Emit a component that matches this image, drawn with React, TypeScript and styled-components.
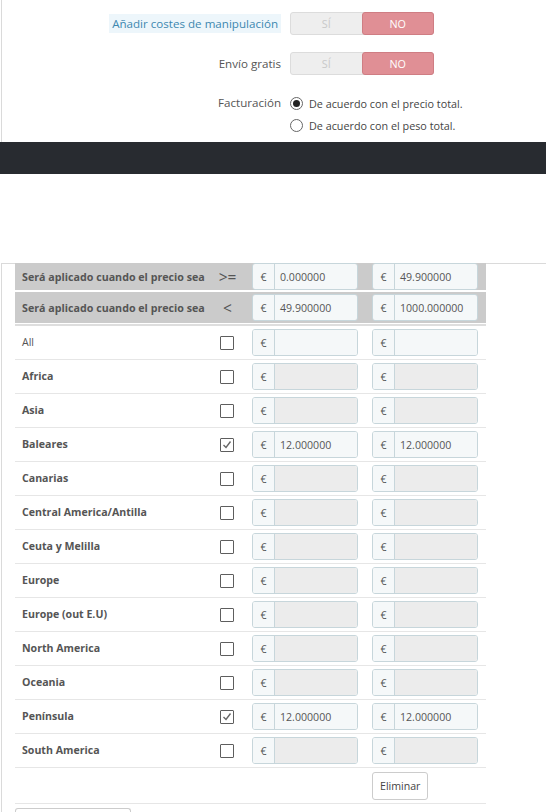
import styled, { createGlobalStyle } from "styled-components";

const GlobalStyle = createGlobalStyle`
    * {
        margin: 0;
        padding: 0;
        box-sizing: border-box;
    }
    body {
        background-color: #fff;
        font-family: "Open Sans", "DejaVu Sans", sans-serif;
        color: #555;
        font-size: 11px;
    }
`

interface IRowProps {
    bold?: boolean;
}
interface IInputProps {
    disabled?: boolean;
}
interface IHeadProps {
    first?: boolean;
}

const TopPanel = styled.div`
    height: 142px;
    margin-left: 1px;
    border-left: 1px solid #dadada;
    padding-top: 12px;
`
const FormRow = styled.div`
    display: grid;
    grid-template-columns: 279px 1fr;
    column-gap: 9px;
    align-items: center;
    margin-bottom: 17px;
`
const Label = styled.div`
    text-align: right;
    font-size: 11.6px;
    color: #555;
`
const TipLabel = styled.span`
    display: inline-block;
    background-color: #edf6fb;
    color: #3d88b0;
    padding: 2px 3px;
`
const Switch = styled.div`
    display: flex;
    width: 144px;
    height: 23px;
    border-radius: 3px;
    background-color: #eee;
    border: 1px solid #dcdcdc;
`
const SwitchHalf = styled.div<{ active?: boolean }>`
    flex: 1;
    display: flex;
    align-items: center;
    justify-content: center;
    font-size: 10.8px;
    color: ${p => p.active ? '#fff' : '#c9c9c9'};
    background-color: ${p => p.active ? '#e08f95' : 'transparent'};
    border: ${p => p.active ? '1px solid #cf7d83' : 'none'};
    border-radius: 3px;
    margin: ${p => p.active ? '-1px -1px -1px 0' : '0'};
`
const RadioList = styled.div`
    display: flex;
    flex-direction: column;
    gap: 8px;
    padding-top: 4px;
`
const RadioItem = styled.div`
    display: flex;
    align-items: center;
    gap: 6px;
    font-size: 10.8px;
    color: #444;
    height: 14px;
`
const RadioDot = styled.span<{ checked?: boolean }>`
    width: 13px;
    height: 13px;
    border-radius: 50%;
    border: 1px solid #666;
    display: flex;
    align-items: center;
    justify-content: center;
    &::after {
        content: "";
        width: 7px;
        height: 7px;
        border-radius: 50%;
        background-color: ${p => p.checked ? '#222' : 'transparent'};
    }
`
const DarkBar = styled.div`
    height: 32px;
    background-color: #282b30;
`
const Spacer = styled.div`
    height: 89px;
`
const TablePanel = styled.div`
    margin-left: 1px;
    border-left: 1px solid #dadada;
    border-top: 1px solid #dadada;
    padding-left: 13px;
`
const Table = styled.div`
    width: 471px;
`
const HeadRow = styled.div<IHeadProps>`
    display: grid;
    grid-template-columns: 197px 33px 120px 121px;
    align-items: center;
    background-color: #cbcbcb;
    height: ${p => p.first ? '27px' : '31px'};
    margin-bottom: ${p => p.first ? '2px' : '0'};
    margin-top: ${p => p.first ? '-1px' : '0'};
    & > * {
        align-self: ${p => p.first ? 'start' : 'center'};
    }
`
const HeadLabel = styled.div`
    padding-left: 7px;
    font-weight: 700;
    font-size: 10.7px;
    color: #555;
    white-space: nowrap;
    align-self: center !important;
`
const Operator = styled.div`
    font-size: 15.5px;
    color: #555;
    text-align: center;
    align-self: center !important;
    padding-right: 2px;
`
const HeadEnd = styled.div`
    height: 3px;
    border-top: 1px solid #fff;
    border-bottom: 2px solid #dedede;
`
const Row = styled.div`
    display: grid;
    grid-template-columns: 197px 33px 120px 121px;
    align-items: center;
    height: 34px;
    border-bottom: 1px solid #e6e6e6;
`
const ZoneName = styled.div<IRowProps>`
    padding-left: 7px;
    padding-bottom: 2px;
    font-weight: ${p => p.bold ? 700 : 400};
    font-size: 10.6px;
    color: #555;
`
const Check = styled.span`
    width: 14px;
    height: 14px;
    border: 1.5px solid #5e5e5e;
    border-radius: 1px;
    display: flex;
    align-items: center;
    justify-content: center;
    justify-self: center;
    margin-right: 3px;
    background-color: #fff;
`
const Cell = styled.div<{ last?: boolean }>`
    padding-left: 7px;
    padding-right: ${p => p.last ? '8px' : '7px'};
`
const InputGroup = styled.div`
    display: flex;
    height: 27px;
    border: 1px solid #c7d6db;
    border-radius: 3px;
    overflow: hidden;
`
const Addon = styled.span`
    width: 22px;
    display: flex;
    align-items: center;
    justify-content: center;
    background-color: #f5f8f9;
    border-right: 1px solid #c7d6db;
    font-size: 10.5px;
    color: #555;
`
const Input = styled.span<IInputProps>`
    flex: 1;
    display: flex;
    align-items: center;
    padding-left: 5px;
    font-size: 10.6px;
    color: #555;
    background-color: ${p => p.disabled ? '#ececec' : '#f5f8f9'};
`
const Button = styled.button`
    font-family: "Open Sans", "DejaVu Sans", sans-serif;
    font-size: 10.6px;
    color: #444;
    background-color: #fff;
    border: 1px solid #ccc;
    border-radius: 3px;
    padding: 0 7px;
    height: 28px;
`
const ButtonRow = styled.div`
    display: grid;
    grid-template-columns: 350px 121px;
    align-items: center;
    height: 36px;
    border-bottom: 1px solid #e6e6e6;
    & > button {
        justify-self: start;
        margin-left: 7px;
    }
`
const BottomButton = styled.div`
    margin-top: 4px;
    width: 116px;
    height: 20px;
    border: 1px solid #ccc;
    border-bottom: none;
    border-radius: 3px 3px 0 0;
`

const zones = [
    { name: "All", bold: false },
    { name: "Africa", bold: true },
    { name: "Asia", bold: true },
    { name: "Baleares", bold: true, checked: true, values: ["12.000000", "12.000000"] },
    { name: "Canarias", bold: true },
    { name: "Central America/Antilla", bold: true },
    { name: "Ceuta y Melilla", bold: true },
    { name: "Europe", bold: true },
    { name: "Europe (out E.U)", bold: true },
    { name: "North America", bold: true },
    { name: "Oceania", bold: true },
    { name: "Península", bold: true, checked: true, values: ["12.000000", "12.000000"] },
    { name: "South America", bold: true },
];

const PriceInput = ({ value, disabled }: { value?: string; disabled?: boolean }) => (
    <InputGroup>
        <Addon>€</Addon>
        <Input disabled={disabled}>{value}</Input>
    </InputGroup>
);

export default function App() {
    return (
        <>
            <GlobalStyle />
            <TopPanel>
                <FormRow>
                    <Label><TipLabel>Añadir costes de manipulación</TipLabel></Label>
                    <Switch>
                        <SwitchHalf>SÍ</SwitchHalf>
                        <SwitchHalf active>NO</SwitchHalf>
                    </Switch>
                </FormRow>
                <FormRow>
                    <Label>Envío gratis</Label>
                    <Switch>
                        <SwitchHalf>SÍ</SwitchHalf>
                        <SwitchHalf active>NO</SwitchHalf>
                    </Switch>
                </FormRow>
                <FormRow style={{ alignItems: "start" }}>
                    <Label style={{ paddingTop: 3 }}>Facturación</Label>
                    <RadioList>
                        <RadioItem><RadioDot checked />De acuerdo con el precio total.</RadioItem>
                        <RadioItem><RadioDot />De acuerdo con el peso total.</RadioItem>
                    </RadioList>
                </FormRow>
            </TopPanel>
            <DarkBar />
            <Spacer />
            <TablePanel>
                <Table>
                    <HeadRow first>
                        <HeadLabel>Será aplicado cuando el precio sea</HeadLabel>
                        <Operator>&gt;=</Operator>
                        <Cell><PriceInput value="0.000000" /></Cell>
                        <Cell last><PriceInput value="49.900000" /></Cell>
                    </HeadRow>
                    <HeadRow>
                        <HeadLabel>Será aplicado cuando el precio sea</HeadLabel>
                        <Operator>&lt;</Operator>
                        <Cell><PriceInput value="49.900000" /></Cell>
                        <Cell last><PriceInput value="1000.000000" /></Cell>
                    </HeadRow>
                    <HeadEnd />
                    {zones.map(z => (
                        <Row key={z.name}>
                            <ZoneName bold={z.bold}>{z.name}</ZoneName>
                            <Check>
                                {z.checked && (
                                    <svg width="10" height="10" viewBox="0 0 10 10">
                                        <polyline points="1.5,5 4,7.5 8.5,1.5" fill="none" stroke="#666" strokeWidth="1.4" />
                                    </svg>
                                )}
                            </Check>
                            <Cell><PriceInput value={z.values?.[0]} disabled={!z.checked && z.name !== "All"} /></Cell>
                            <Cell last><PriceInput value={z.values?.[1]} disabled={!z.checked && z.name !== "All"} /></Cell>
                        </Row>
                    ))}
                    <ButtonRow>
                        <span />
                        <Button>Eliminar</Button>
                    </ButtonRow>
                </Table>
                <BottomButton />
            </TablePanel>
        </>
    );
}
